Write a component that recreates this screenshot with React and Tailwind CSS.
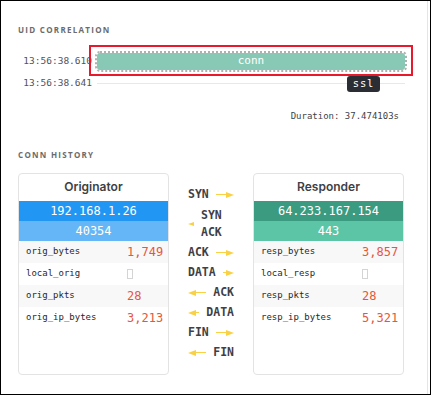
import React from 'react';

const MONO = { fontFamily: '"DejaVu Sans Mono", "Liberation Mono", monospace' };
const SANS = { fontFamily: 'Inter, "Open Sans", sans-serif' };

const Head = ({ dir = 'right', w = 8, h = 6 }) => (
  <svg width={w} height={h} viewBox={`0 0 ${w} ${h}`} className="shrink-0">
    {dir === 'right' ? (
      <polygon points={`0,0 ${w},${h / 2} 0,${h}`} fill="#fbd144" />
    ) : (
      <polygon points={`${w},0 0,${h / 2} ${w},${h}`} fill="#fbd144" />
    )}
  </svg>
);

const Arrow = ({ dir }) => (
  <div className="flex-1 min-w-0 flex items-center">
    {dir === 'left' && <Head dir="left" />}
    <div className="flex-1 min-w-0 h-[1.5px] bg-[#fbd144]"></div>
    {dir === 'right' && <Head dir="right" />}
  </div>
);

const Step = ({ label, dir }) => (
  <div className="h-[20px] flex items-center gap-[7px]">
    {dir === 'right' ? (
      <>
        <span className="shrink-0">{label}</span>
        <Arrow dir="right" />
      </>
    ) : (
      <>
        <Arrow dir="left" />
        <span className="shrink-0">{label}</span>
      </>
    )}
  </div>
);

const Card = ({ title, ip, port, ipBg, portBg, rows }) => (
  <div className="w-[151px] h-[202px] shrink-0 border border-[#e3e3e3] rounded-[4px] overflow-hidden bg-white">
    <div className="h-[27px] flex items-center justify-center text-[12px] font-semibold text-[#3f3f46]" style={SANS}>
      {title}
    </div>
    <div className={`h-[20px] flex items-center justify-center text-white text-[12px] ${ipBg}`} style={MONO}>{ip}</div>
    <div className={`h-[20px] flex items-center justify-center text-white text-[12px] ${portBg}`} style={MONO}>{port}</div>
    {rows.map((r, i) => (
      <div key={r[0]} className={`h-[22px] flex items-center ${i % 2 === 0 ? 'bg-[#f8f8f8]' : ''}`}>
        <span className="w-[108px] pl-[7px] text-[9px] text-[#27272a]" style={MONO}>{r[0]}</span>
        {r[1] === null ? (
          <span className="w-[6px] h-[10px] border border-[#d4d4d4]"></span>
        ) : (
          <span className="text-[12px] text-[#e5573b]" style={MONO}>{r[1]}</span>
        )}
      </div>
    ))}
  </div>
);

export default function App() {
  return (
    <div className="w-[431px] h-[395px] border border-black bg-white overflow-hidden">
      <div className="w-[427px] h-full border-r border-[#e5e5e5] pl-[17px] pt-[24px]">
        <div className="text-[8px] font-bold tracking-[0.16em] text-[#6b6b6b] leading-[10px]" style={{ fontFamily: '"Open Sans", sans-serif' }}>
          UID CORRELATION
        </div>

        <div className="mt-[15.5px] w-[387px]">
          <div className="h-[22px] flex items-center">
            <span className="w-[79px] pr-[5px] text-right text-[9.5px] text-[#52525b]" style={MONO}>13:56:38.610</span>
            <div className="relative flex-1">
              <div className="h-[17px] rounded-[3px] bg-[#88c9b5] outline-2 outline-dotted outline-[#b0b0b0] flex items-center justify-center text-white text-[11px]" style={MONO}>
                conn
              </div>
              <div className="absolute left-[-8px] right-[-8px] top-[-8px] bottom-[-6px] border-2 border-[#e8192c]"></div>
            </div>
          </div>
          <div className="h-[22px] flex items-center">
            <span className="w-[79px] pr-[5px] text-right text-[9.5px] text-[#52525b]" style={MONO}>13:56:38.641</span>
            <div className="relative flex-1 h-[1px] bg-[#e8e8e8]">
              <div className="absolute left-[250px] top-[-7px] w-[33px] h-[16px] rounded-[3px] bg-[#2a2d33] flex items-center justify-center text-white text-[10.5px] tracking-[0.08em]" style={MONO}>
                ssl
              </div>
            </div>
          </div>
        </div>

        <div className="mt-[15px] w-[387px] pr-[6px] text-right text-[9px] leading-[12px] text-[#3f3f46]" style={MONO}>
          Duration: 37.474103s
        </div>

        <div className="mt-[28px] text-[8px] font-bold tracking-[0.16em] text-[#6b6b6b] leading-[10px]" style={{ fontFamily: '"Open Sans", sans-serif' }}>
          CONN HISTORY
        </div>

        <div className="mt-[13px] flex">
          <Card
            title="Originator"
            ip="192.168.1.26"
            port="40354"
            ipBg="bg-[#2196f3]"
            portBg="bg-[#64b6f7]"
            rows={[['orig_bytes', '1,749'], ['local_orig', null], ['orig_pkts', '28'], ['orig_ip_bytes', '3,213']]}
          />
          <div className="ml-[19px] mr-[19px] w-[46px] pt-[12px] text-[11.5px] font-bold text-[#3f3f46]" style={MONO}>
            <Step label="SYN" dir="right" />
            <div className="h-[38px] flex items-center">
              <Head dir="left" w={6} h={4} />
              <span className="ml-[7px] leading-[17px]">SYN<br />ACK</span>
            </div>
            <Step label="ACK" dir="right" />
            <Step label="DATA" dir="right" />
            <Step label="ACK" dir="left" />
            <Step label="DATA" dir="left" />
            <Step label="FIN" dir="right" />
            <Step label="FIN" dir="left" />
          </div>
          <Card
            title="Responder"
            ip="64.233.167.154"
            port="443"
            ipBg="bg-[#3a9b80]"
            portBg="bg-[#5cc5a5]"
            rows={[['resp_bytes', '3,857'], ['local_resp', null], ['resp_pkts', '28'], ['resp_ip_bytes', '5,321']]}
          />
        </div>
      </div>
    </div>
  );
}
